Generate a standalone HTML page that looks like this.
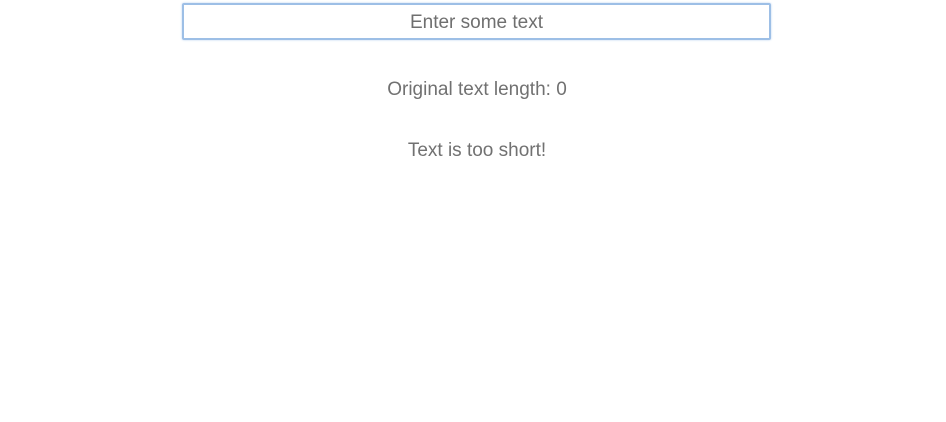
<!DOCTYPE html>
<html><head><meta charset="utf-8"><style>
html,body{margin:0;padding:0;background:#fff;width:946px;height:422px;overflow:hidden;font-family:"Liberation Sans",Arial,sans-serif;color:#717171}
.box{position:absolute;left:182px;top:3px;width:585px;height:33px;border:2px solid #9dbfe6;border-radius:2px;box-shadow:0 0 2px #b8d2f0;text-align:center;line-height:35px;font-size:19px;color:#6f6f6f}
.t{position:absolute;left:4px;width:946px;text-align:center;font-size:19px}
</style></head><body>
<div class="box">Enter some text</div>
<div class="t" style="top:79px">Original text length: 0</div>
<div class="t" style="top:140px">Text is too short!</div>
</body></html>
